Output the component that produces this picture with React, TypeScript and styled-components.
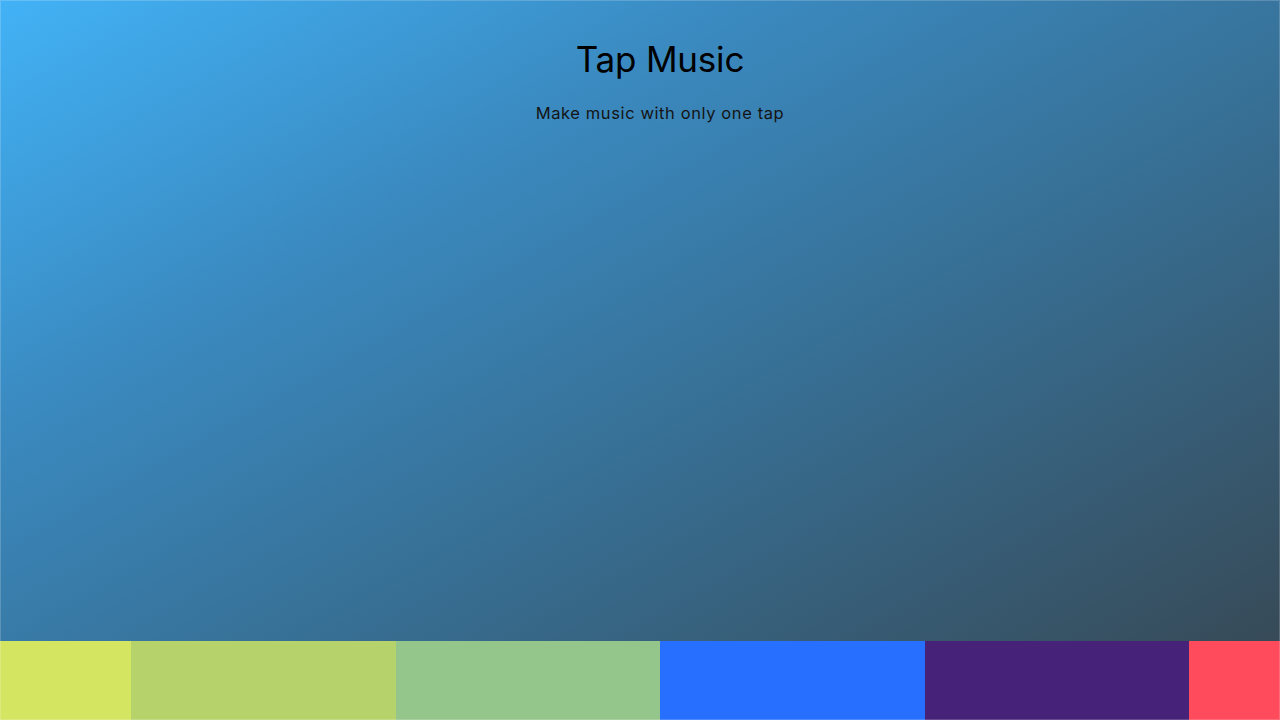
import React from "react";
import styled, { createGlobalStyle } from "styled-components";

const Global = createGlobalStyle`
  html, body { margin: 0; padding: 0; height: 100%; }
  body { font-family: Inter, "Open Sans", sans-serif; }
  * { box-sizing: border-box; }
`;

const Shell = styled.div`
  position: relative;
  height: 100vh;
  display: flex;
  flex-direction: column;
  background: linear-gradient(to bottom right, #42b2f6 0%, #3a89bf 30%, #376c8f 60%, #37454f 100%);
  &::after {
    content: "";
    position: absolute;
    inset: 0;
    border: 1px solid rgba(255, 255, 255, 0.18);
    pointer-events: none;
  }
`;

const Header = styled.header`
  flex: 1;
  display: flex;
  flex-direction: column;
  align-items: center;
  padding-top: 37px;
  padding-left: 40px;
`;

const Title = styled.h1`
  margin: 0;
  font-size: 35px;
  line-height: 44px;
  font-weight: 400;
  color: #000;
  letter-spacing: -0.2px;
`;

const Subtitle = styled.p`
  margin: 22px 0 0;
  font-size: 16.5px;
  line-height: 20px;
  color: #141414;
  letter-spacing: 0.6px;
`;

const Pads = styled.div`
  height: 79px;
  display: grid;
  grid-template-columns: 131px repeat(4, 264.5px) 1fr;
`;

const Pad = styled.div<{ $c: string }>`
  background: ${(p) => p.$c};
`;

const colors = ["#d4e562", "#b6d36b", "#94c58b", "#2770ff", "#462378", "#ff4b5c"];

export default function App() {
  return (
    <>
      <Global />
      <Shell>
        <Header>
          <Title>Tap Music</Title>
          <Subtitle>Make music with only one tap</Subtitle>
        </Header>
        <Pads>
          {colors.map((c) => (
            <Pad key={c} $c={c} />
          ))}
        </Pads>
      </Shell>
    </>
  );
}
